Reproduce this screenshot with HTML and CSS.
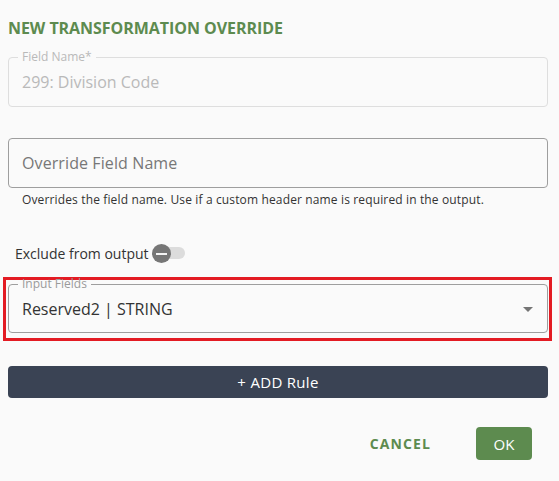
FILE: index.html
```html
<!DOCTYPE html>
<html lang="en">

<head>
    <meta charset="UTF-8">
    <meta name="viewport" content="width=device-width, initial-scale=1.0">
    <title>New Transformation Override</title>
    <link rel="stylesheet" href="styles.css">
</head>

<body>
    <div class="dialog">
        <h2 class="dialog-title">NEW TRANSFORMATION OVERRIDE</h2>

        <div class="field field-disabled">
            <span class="field-label">Field Name*</span>
            <div class="field-value">299: Division Code</div>
        </div>

        <div class="override">
            <input class="text-input" type="text" placeholder="Override Field Name">
            <div class="helper-text">Overrides the field name. Use if a custom header name is required in the output.</div>
        </div>

        <label class="exclude-row">
            <span>Exclude from output</span>
            <span class="switch">
                <span class="switch-track"></span>
                <span class="switch-thumb"></span>
            </span>
        </label>

        <div class="highlight">
            <div class="field field-select">
                <span class="field-label">Input Fields</span>
                <div class="field-value">Reserved2 | STRING</div>
                <svg class="select-arrow" width="10" height="5" viewBox="0 0 10 5">
                    <path d="M0 0 L10 0 L5 5 Z" fill="#757575" />
                </svg>
            </div>
        </div>

        <button class="add-rule">+ ADD Rule</button>

        <div class="actions">
            <button class="btn-cancel">CANCEL</button>
            <button class="btn-ok">OK</button>
        </div>
    </div>
</body>

</html>
```

FILE: styles.css
```css
:root {
    --green: #5d8b4f;
    --dark: #3a4354;
    --border: #9e9e9e;
    --page: #fafafa;
}

body {
    margin: 0;
    background-color: var(--page);
    font-family: 'Open Sans', 'Liberation Sans', sans-serif;
    color: #333;
}

.dialog {
    padding: 18px 11px 0 8px;
    display: flex;
    flex-direction: column;
}

.dialog-title {
    margin: 0 0 19px 0;
    font-size: 16px;
    font-weight: 700;
    color: var(--green);
    line-height: 20px;
    letter-spacing: -0.05px;
}

/* outlined field, label sits on the top border */
.field {
    position: relative;
    height: 50px;
    box-sizing: border-box;
    padding: 0 13px;
    border: 1px solid var(--border);
    border-radius: 4px;
    display: flex;
    align-items: center;
}

.field-label {
    position: absolute;
    left: 9px;
    top: -8px;
    padding: 0 4px;
    /* only blank out the strip of border behind the text */
    background: linear-gradient(transparent 4px, var(--page) 4px, var(--page) 11px, transparent 11px);
    font-size: 12px;
    line-height: 14px;
    color: #9a9a9a;
}

.field-value {
    font-size: 16px;
    line-height: 20px;
}

.field-disabled {
    border-color: #dedede;
}

.field-disabled .field-label,
.field-disabled .field-value {
    color: #b9b9b9;
}

.override {
    margin-top: 31px;
}

.text-input {
    display: block;
    width: 100%;
    height: 50px;
    box-sizing: border-box;
    margin: 0;
    padding: 0 13px;
    border: 1px solid var(--border);
    border-radius: 4px;
    background: transparent;
    font-family: inherit;
    font-size: 16px;
    letter-spacing: 0.1px;
    color: #333;
}

.text-input::placeholder {
    color: #777;
}

.helper-text {
    margin: 5px 0 0 14px;
    font-size: 12px;
    line-height: 14px;
    letter-spacing: 0.14px;
    color: #333;
}

.exclude-row {
    display: flex;
    align-items: center;
    margin: 36px 0 0 7px;
    font-size: 14px;
    color: #333;
    height: 20px;
}

.switch {
    position: relative;
    width: 33px;
    height: 20px;
    margin-left: 3px;
}

.switch-track {
    position: absolute;
    left: 3px;
    top: 4px;
    width: 30px;
    height: 12px;
    border-radius: 6px;
    background: #dcdcdc;
}

/* thumb with the "off" minus mark */
.switch-thumb {
    position: absolute;
    left: 0;
    top: 1px;
    width: 19px;
    height: 19px;
    border-radius: 50%;
    background: #767676;
}

.switch-thumb::after {
    content: '';
    position: absolute;
    left: 4px;
    top: 8.5px;
    width: 11px;
    height: 2px;
    background: #f4f4f4;
}

.highlight {
    margin: 14px -4px 0 -5px;
    padding: 4px 1px 5px 2px;
    border: 3px solid #e31b23;
}

.field-select {
    height: 49px;
}

.field-select .field-value {
    color: #333;
}

.select-arrow {
    position: absolute;
    right: 14px;
    top: 22px;
}

.add-rule {
    margin-top: 25px;
    height: 32px;
    border: none;
    border-radius: 4px;
    background: var(--dark);
    color: #fff;
    font-family: inherit;
    font-size: 15px;
    letter-spacing: 0.3px;
    cursor: pointer;
}

.actions {
    display: flex;
    justify-content: flex-end;
    align-items: center;
    gap: 45px;
    margin: 29px 16px 0 0;
}

.btn-cancel {
    border: none;
    background: none;
    padding: 0;
    font-family: inherit;
    font-size: 14px;
    font-weight: 700;
    letter-spacing: 1.1px;
    color: var(--green);
    cursor: pointer;
}

.btn-ok {
    width: 56px;
    height: 33px;
    border: none;
    border-radius: 4px;
    background: var(--green);
    color: #fff;
    font-family: inherit;
    font-size: 15px;
    cursor: pointer;
}
```
